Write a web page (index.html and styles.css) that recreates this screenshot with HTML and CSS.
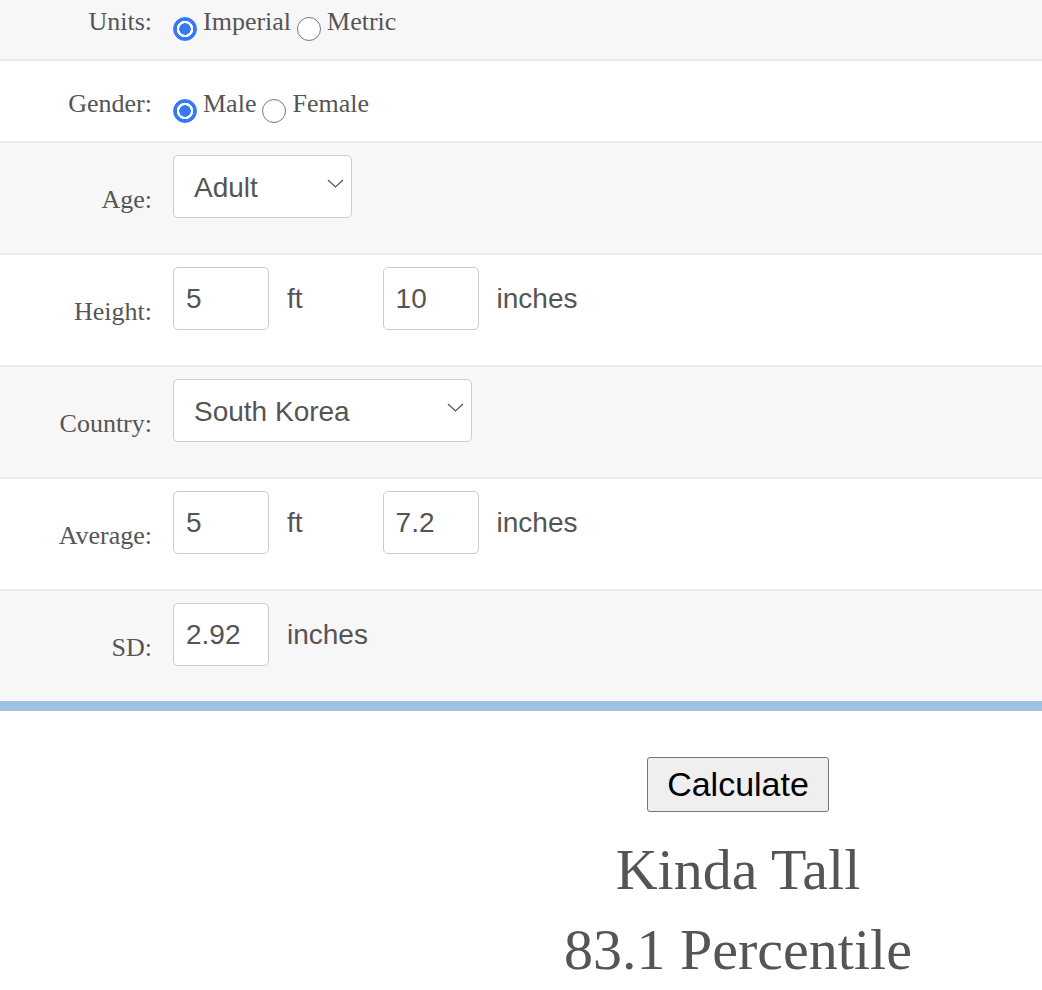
FILE: index.html
```html
<!DOCTYPE html>
<html lang="en">

<head>
    <meta charset="UTF-8">
    <meta name="viewport" content="width=device-width, initial-scale=1.0">
    <title>Height Percentile</title>
    <link rel="stylesheet" href="styles.css">
</head>

<body>
    <form id="calc">
        <div class="row short">
            <label class="field-label">Units:</label>
            <div class="options">
                <input type="radio" name="units" checked>
                <span>Imperial</span>
                <input type="radio" name="units">
                <span>Metric</span>
            </div>
        </div>

        <div class="row short">
            <label class="field-label">Gender:</label>
            <div class="options">
                <input type="radio" name="gender" checked>
                <span>Male</span>
                <input type="radio" name="gender">
                <span>Female</span>
            </div>
        </div>

        <div class="row">
            <label class="field-label">Age:</label>
            <div class="controls">
                <span class="select-wrap">
                    <select class="age">
                        <option>Adult</option>
                    </select>
                    <svg class="chevron" width="17" height="9" viewBox="0 0 17 9">
                        <path d="M1 1 L8.5 8 L16 1" fill="none" stroke="#555" stroke-width="1.2" />
                    </svg>
                </span>
            </div>
        </div>

        <div class="row">
            <label class="field-label">Height:</label>
            <div class="controls">
                <input type="text" class="num" value="5">
                <span class="unit ft">ft</span>
                <input type="text" class="num" value="10">
                <span class="unit">inches</span>
            </div>
        </div>

        <div class="row">
            <label class="field-label">Country:</label>
            <div class="controls">
                <span class="select-wrap">
                    <select class="country">
                        <option>South Korea</option>
                    </select>
                    <svg class="chevron" width="17" height="9" viewBox="0 0 17 9">
                        <path d="M1 1 L8.5 8 L16 1" fill="none" stroke="#555" stroke-width="1.2" />
                    </svg>
                </span>
            </div>
        </div>

        <div class="row">
            <label class="field-label">Average:</label>
            <div class="controls">
                <input type="text" class="num" value="5">
                <span class="unit ft">ft</span>
                <input type="text" class="num" value="7.2">
                <span class="unit">inches</span>
            </div>
        </div>

        <div class="row last">
            <label class="field-label">SD:</label>
            <div class="controls">
                <input type="text" class="num" value="2.92">
                <span class="unit">inches</span>
            </div>
        </div>
    </form>

    <div class="result">
        <button type="button" class="calc-btn">Calculate</button>
        <div class="verdict">Kinda Tall</div>
        <div class="verdict">83.1 Percentile</div>
    </div>
</body>

</html>
```

FILE: styles.css
```css
body {
    margin: 0;
    padding: 0;
    font-family: "Liberation Serif", "Times New Roman", serif;
    color: #555;
    background-color: #fff;
}

#calc {
    margin-top: -21px;
}

.row {
    display: grid;
    grid-template-columns: 152px auto;
    column-gap: 21px;
    align-items: start;
    height: 98px;
    padding-top: 12px;
    background-color: #f7f7f7;
    border-bottom: 2px solid #ebebeb;
}

.row:nth-child(even) {
    background-color: #fff;
}

.row.short {
    height: 52px;
    padding-top: 28px;
}

.row.last {
    border-bottom: 10px solid #9dc2e3;
}

.field-label {
    text-align: right;
    font-size: 26px;
    line-height: 30px;
    padding-top: 30px;
}

.row.short .field-label {
    padding-top: 0;
}

.options {
    display: flex;
    align-items: flex-start;
    gap: 6px;
    font-size: 26px;
    line-height: 30px;
}

.options input[type="radio"] {
    appearance: none;
    -webkit-appearance: none;
    width: 24px;
    height: 24px;
    margin: 10px 0 0;
    border: 1px solid #767676;
    border-radius: 50%;
    background-color: #fff;
    box-sizing: border-box;
}

.options input[type="radio"]:checked {
    border-color: #3679f6;
    background: radial-gradient(circle, #3679f6 0 5.5px, #fff 6px 8px, #3679f6 8.5px);
}

.controls {
    display: flex;
    align-items: baseline;
    font-family: "Liberation Sans", Arial, sans-serif;
    font-size: 28px;
}

.num {
    width: 96px;
    height: 63px;
    box-sizing: border-box;
    padding: 0 12px;
    border: 1px solid #ccc;
    border-radius: 5px;
    font-family: "Liberation Sans", Arial, sans-serif;
    font-size: 28px;
    color: #555;
    background-color: #fff;
}

.unit {
    margin-left: 18px;
}

.unit.ft {
    margin-right: 80px;
}

.select-wrap {
    position: relative;
    display: inline-block;
}

select {
    appearance: none;
    -webkit-appearance: none;
    height: 63px;
    box-sizing: border-box;
    padding: 2px 0 0 20px;
    border: 1px solid #ccc;
    border-radius: 5px;
    font-family: "Liberation Sans", Arial, sans-serif;
    font-size: 28px;
    color: #555;
    background-color: #fff;
}

select.age {
    width: 179px;
}

select.country {
    width: 299px;
}

.chevron {
    position: absolute;
    right: 8px;
    top: 24px;
    pointer-events: none;
}

.result {
    padding-left: 434px;
    padding-top: 46px;
    text-align: center;
}

.calc-btn {
    padding: 7px 19px;
    font-family: "Liberation Sans", Arial, sans-serif;
    font-size: 34px;
    color: #000;
    background-color: #efefef;
    border: 1px solid #767676;
    border-radius: 3px;
    margin-bottom: 18px;
}

.verdict {
    font-size: 58px;
    line-height: 80px;
    color: #555;
}
```
